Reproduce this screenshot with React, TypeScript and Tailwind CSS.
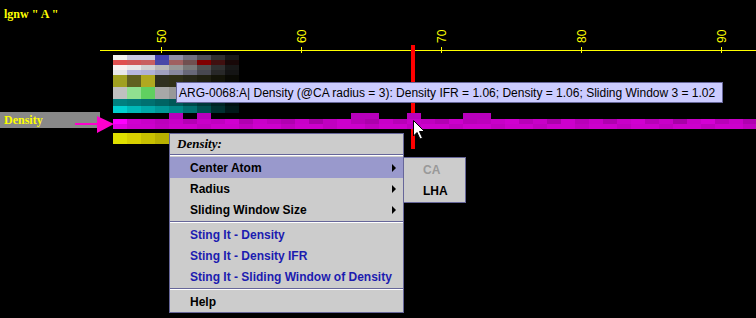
import React from 'react';

// heat map rows beside the track label (fade to black on the right)
const gridRows: { y: number; h: number; colors: string[] }[] = [
  { y: 55, h: 5, colors: ['#f0f0f0', '#c8c8e0', '#c8c8e0', '#4040b0', '#9090a8', '#707080', '#505058', '#303030', '#181818'] },
  { y: 60, h: 5, colors: ['#e05050', '#d05858', '#c86060', '#4848a8', '#a06060', '#705050', '#800000', '#401010', '#180808'] },
  { y: 65, h: 5, colors: ['#f8f0f0', '#e8e8e8', '#d0d0d0', '#b8b8b8', '#989898', '#787878', '#505050', '#303030', '#181818'] },
  { y: 70, h: 5, colors: ['#e8e8e8', '#b8b8e0', '#b0b0d8', '#a0a0c0', '#8888a0', '#686878', '#484850', '#282828', '#141414'] },
  { y: 75, h: 12, colors: ['#a0a020', '#606020', '#b0a820', '#303020', '#303018', '#282818', '#202010', '#141408', '#0a0a04'] },
  { y: 87, h: 12, colors: ['#c0c0c0', '#90e090', '#60d060', '#a8a8a8', '#989898', '#787878', '#585858', '#303030', '#181818'] },
  { y: 99, h: 7, colors: ['#008080', '#007878', '#007070', '#006464', '#005858', '#004848', '#003838', '#002424', '#001010'] },
  { y: 106, h: 7, colors: ['#00d0d0', '#00b8b8', '#00a8a8', '#009898', '#008888', '#007070', '#005050', '#003030', '#001818'] },
  { y: 133, h: 11, colors: ['#e0e000', '#d8d000', '#c8c000', '#b8b000', '#a8a000'] },
];

const barTop = ['#ff00ff', '#d000d0', '#c800c8', '#bc00bc', '#c800c8', '#b400b4', '#c800c8', '#c000c0', '#d000d0', '#b000b0', '#c800c8', '#bc00bc', '#b000b0', '#c800c8', '#a800a8', '#c000c0', '#cc00cc', '#b800b8', '#ac00ac', '#c800c8', '#b800b8', '#c800c8', '#c000c0', '#b400b4', '#cc00cc', '#b800b8', '#bc00bc', '#c800c8', '#d000d0', '#b800b8', '#c800c8', '#ac00ac', '#cc00cc', '#b800b8', '#c800c8', '#b000b0', '#c800c8', '#d000d0', '#b800b8', '#c800c8', '#a800a8', '#c800c8', '#d400d4', '#b800b8', '#c800c8', '#b000b0', '#c800c8'];
const bumps = [4, 6, 17, 18, 21, 25, 26];

const ticks = [50, 60, 70, 80, 90];

const Separator = () => (
  <div className="h-[4px] flex flex-col justify-center">
    <div className="h-px bg-[#666699]" />
    <div className="h-px bg-white" />
  </div>
);

const MenuItem: React.FC<{ label: string; sub?: boolean; active?: boolean; blue?: boolean }> = ({ label, sub, active, blue }) => (
  <div className={`h-[21px] flex items-center justify-between pl-[20px] pr-[7px] text-[12px] font-bold ${active ? 'bg-[#9999cc]' : ''} ${blue ? 'text-[#1c1cb0]' : 'text-black'}`}>
    <span>{label}</span>
    {sub && (
      <svg width="4" height="8" viewBox="0 0 4 8">
        <path d="M0 0 L4 4 L0 8 Z" fill="#000" />
      </svg>
    )}
  </div>
);

export default function App() {
  return (
    <div className="relative w-[756px] h-[318px] bg-black overflow-hidden font-['Liberation_Sans',Arial,sans-serif]">
      <div className="absolute left-[4px] top-[5px] text-[12px] font-bold text-[#ffff00] font-['Liberation_Serif',serif] whitespace-pre">
        lgnw " A "
      </div>

      <div className="absolute left-0 top-[112px] w-[100px] h-[16px] bg-[#888888] flex items-center pl-[4px]">
        <span className="text-[12px] font-bold text-[#ffff00] font-['Liberation_Serif',serif]">Density</span>
      </div>

      {/* track canvas */}
      <svg className="absolute left-0 top-0" width="756" height="318">
        <line x1="100" y1="50.5" x2="756" y2="50.5" stroke="#ffff00" strokeWidth="1" />
        {ticks.map((t) => {
          const x = 161 + (t - 50) * 14;
          return (
            <g key={t}>
              <line x1={x + 0.5} y1="47" x2={x + 0.5} y2="53" stroke="#ffff00" />
              <text
                transform={`translate(${x + 5},${43}) rotate(-90)`}
                fontSize="12"
                fill="#ffff00"
                fontFamily="Liberation Sans, Arial, sans-serif"
              >
                {t}
              </text>
            </g>
          );
        })}

        {/* cursor position */}
        <rect x="411" y="45" width="4" height="104" fill="#ff0000" />

        {gridRows.map((row) =>
          row.colors.map((c, i) => (
            <rect key={`${row.y}-${i}`} x={113 + i * 14} y={row.y} width="14" height={row.h} fill={c} />
          ))
        )}

        {/* density bar */}
        {barTop.map((c, i) => (
          <g key={i}>
            <rect x={113 + i * 14} y="119" width="14" height="5" fill={c} />
            <rect x={113 + i * 14} y="124" width="14" height="5" fill={i === 0 ? '#e000e0' : i % 3 === 0 ? '#c000c0' : '#cc00cc'} />
            {bumps.includes(i) && <rect x={113 + i * 14} y="113" width="14" height="6" fill="#b800bc" />}
          </g>
        ))}

        {/* arrow to the track */}
        <rect x="75" y="123" width="24" height="2" fill="#ff00cc" />
        <path d="M97 116 L114 124 L97 133 Z" fill="#ff00cc" />

        {/* mouse pointer */}
        <path
          d="M413.5 120.5 L413.5 136 L417 132.5 L420 139 L422.5 138 L419.5 131.5 L424.5 131.5 Z"
          fill="#ffffff"
          stroke="#000000"
          strokeWidth="1"
        />
      </svg>

      {/* tooltip */}
      <div className="absolute left-[176px] top-[82px] w-[547px] h-[21px] bg-[#ccccff] border border-[#666699] flex items-center pl-[2px] text-[12px] text-black whitespace-nowrap">
        ARG-0068:A| Density (@CA radius = 3): Density IFR = 1.06; Density = 1.06; Sliding Window 3 = 1.02
      </div>

      {/* popup menu */}
      <div className="absolute left-[169px] top-[133px] w-[235px] border border-[#666699] bg-[#cccccc] flex flex-col">
        <div className="h-[19px] flex items-center pl-[7px] text-[13px] font-bold italic text-black font-['Liberation_Serif',serif]">
          Density:
        </div>
        <Separator />
        <MenuItem label="Center Atom" sub active />
        <MenuItem label="Radius" sub />
        <MenuItem label="Sliding Window Size" sub />
        <Separator />
        <MenuItem label="Sting It - Density" blue />
        <MenuItem label="Sting It - Density IFR" blue />
        <MenuItem label="Sting It - Sliding Window of Density" blue />
        <Separator />
        <MenuItem label="Help" />
      </div>

      {/* submenu */}
      <div className="absolute left-[403px] top-[157px] w-[63px] h-[46px] border border-[#666699] bg-[#cccccc] flex flex-col pt-[1px] text-[12px] font-bold">
        <div className="h-[21px] flex items-center pl-[19px] text-[#999999]">CA</div>
        <div className="h-[21px] flex items-center pl-[19px] text-black">LHA</div>
      </div>
    </div>
  );
}
